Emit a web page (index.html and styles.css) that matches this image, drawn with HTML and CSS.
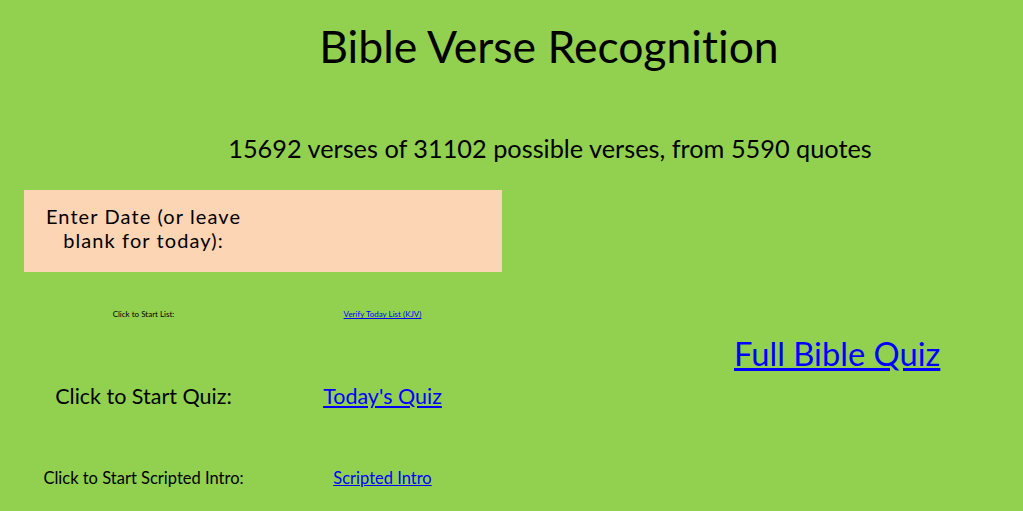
FILE: index.html
```html
<!DOCTYPE html>
<html lang="en">
<head>
<meta charset="utf-8">
<title>Bible Verse Recognition</title>
<link rel="stylesheet" href="styles.css">
</head>
<body>
<div class="sheet">
  <h1 class="title">Bible Verse Recognition</h1>
  <p class="subtitle">15692 verses of 31102 possible verses, from 5590 quotes</p>
  <div class="main">
    <div class="left">
      <div class="date-box">
        <div class="date-label">Enter Date (or leave<br>blank for today):</div>
      </div>
      <div class="row row-list">
        <span class="label">Click to Start List:</span>
        <a class="link" href="#">Verify Today List (KJV)</a>
      </div>
      <div class="row row-quiz">
        <span class="label">Click to Start Quiz:</span>
        <a class="link" href="#">Today's Quiz</a>
      </div>
      <div class="row row-intro">
        <span class="label">Click to Start Scripted Intro:</span>
        <a class="link" href="#">Scripted Intro</a>
      </div>
    </div>
    <div class="right">
      <a class="full-link" href="#">Full Bible Quiz</a>
    </div>
  </div>
</div>
</body>
</html>
```

FILE: styles.css
```css
html, body {
  margin: 0;
  padding: 0;
}
body {
  background: #92d050;
  font-family: Lato, "Open Sans", sans-serif;
  font-variant-ligatures: none;
  color: #000;
  width: 1023px;
  height: 511px;
  overflow: hidden;
}
.sheet {
  display: flex;
  flex-direction: column;
}
.title {
  margin: 24px 0 0 0;
  padding-left: 75px;
  text-align: center;
  font-size: 44.5px;
  font-weight: 400;
  line-height: 44px;
}
.subtitle {
  margin: 68px 0 0 0;
  padding-left: 77px;
  text-align: center;
  font-size: 25.3px;
  line-height: 25px;
}
.main {
  display: flex;
  margin-top: 29px;
}
.left {
  display: flex;
  flex-direction: column;
  margin-left: 24px;
  width: 478px;
  flex: none;
}
.date-box {
  background: #fcd5b4;
  height: 82px;
  box-sizing: border-box;
  padding-top: 14px;
}
.date-label {
  width: 239px;
  text-align: center;
  font-size: 20px;
  letter-spacing: 1.1px;
  line-height: 24px;
}
.row {
  display: grid;
  grid-template-columns: 239px 239px;
  text-align: center;
}
.link {
  color: #0000ff;
  text-decoration: underline;
}
.row-list {
  margin-top: 37px;
  font-size: 8px;
  line-height: 10px;
}
.row-quiz {
  margin-top: 65px;
  font-size: 21.5px;
  line-height: 24px;
}
.row-intro {
  margin-top: 61px;
  font-size: 16.5px;
  line-height: 18px;
}
.right {
  padding-left: 232px;
  padding-top: 146px;
}
.full-link {
  color: #0000ff;
  text-decoration: underline;
  font-size: 32.7px;
  line-height: 36px;
  display: inline-block;
}
```
